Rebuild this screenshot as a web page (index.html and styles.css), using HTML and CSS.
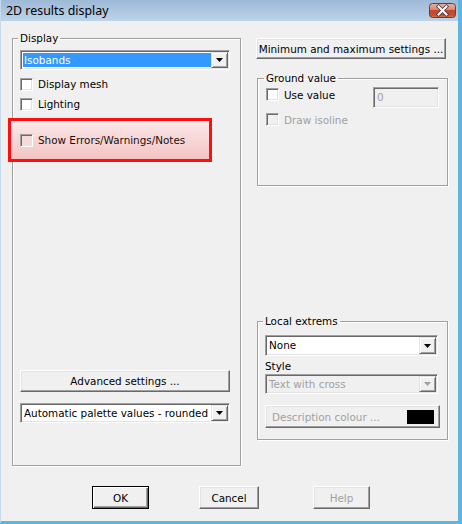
FILE: index.html
```html
<!DOCTYPE html>
<html lang="en">
<head>
  <meta charset="UTF-8" />
  <title>2D results display</title>
  <link rel="stylesheet" href="styles.css">
</head>
<body>
  <div class="window">
    <div class="titlebar">
      <span class="title">2D results display</span>
      <span class="close-btn">
        <svg width="27" height="15" viewBox="0 0 27 15">
          <defs>
            <linearGradient id="closeFill" x1="0" y1="0" x2="0" y2="1">
              <stop offset="0" stop-color="#eab2a4"/>
              <stop offset="0.45" stop-color="#d98672"/>
              <stop offset="0.5" stop-color="#c4462c"/>
              <stop offset="0.85" stop-color="#c9502f"/>
              <stop offset="1" stop-color="#e57c55"/>
            </linearGradient>
          </defs>
          <rect x="0.5" y="0.5" width="26" height="14" rx="3" fill="url(#closeFill)" stroke="#6b3b3b"/>
          <path d="M9.5 3.5 L17.5 11.5 M17.5 3.5 L9.5 11.5" stroke="#4a3a3a" stroke-width="3.6" stroke-linecap="square"/>
          <path d="M9.5 3.5 L17.5 11.5 M17.5 3.5 L9.5 11.5" stroke="#ffffff" stroke-width="2" stroke-linecap="square"/>
        </svg>
      </span>
    </div>

    <div class="client">
      <div class="columns">
        <!-- left: display settings -->
        <fieldset class="group group-display">
          <legend>Display</legend>
          <div class="combo">
            <span class="combo-text selected">Isobands</span>
            <span class="combo-arrow"><svg width="7" height="4" viewBox="0 0 7 4"><polygon points="0,0 7,0 3.5,4" fill="#000"/></svg></span>
          </div>
          <label class="check-row first-row"><span class="checkbox"></span>Display mesh</label>
          <label class="check-row"><span class="checkbox"></span>Lighting</label>
          <div class="highlight">
            <label class="check-row"><span class="checkbox pink"></span>Show Errors/Warnings/Notes</label>
          </div>
          <div class="spacer"></div>
          <div class="btn btn-advanced">Advanced settings ...</div>
          <div class="combo combo-palette">
            <span class="combo-text">Automatic palette values - rounded</span>
            <span class="combo-arrow"><svg width="7" height="4" viewBox="0 0 7 4"><polygon points="0,0 7,0 3.5,4" fill="#000"/></svg></span>
          </div>
        </fieldset>

        <!-- right: ranges, ground, extremes -->
        <div class="right-col">
          <div class="btn btn-minmax">Minimum and maximum settings ...</div>

          <fieldset class="group group-ground">
            <legend>Ground value</legend>
            <div class="ground-row">
              <label class="check-row small-row"><span class="checkbox"></span>Use value</label>
              <div class="value-input">0</div>
            </div>
            <label class="check-row small-row disabled isoline-row"><span class="checkbox off"></span>Draw isoline</label>
          </fieldset>

          <fieldset class="group group-extrems">
            <legend>Local extrems</legend>
            <div class="combo combo-none">
              <span class="combo-text">None</span>
              <span class="combo-arrow"><svg width="7" height="4" viewBox="0 0 7 4"><polygon points="0,0 7,0 3.5,4" fill="#000"/></svg></span>
            </div>
            <div class="field-label">Style</div>
            <div class="combo combo-style off">
              <span class="combo-text">Text with cross</span>
              <span class="combo-arrow"><svg width="7" height="4" viewBox="0 0 7 4"><polygon points="0,0 7,0 3.5,4" fill="#a0a0a0"/></svg></span>
            </div>
            <div class="btn btn-colour disabled">
              <span>Description colour ...</span>
              <span class="swatch"></span>
            </div>
          </fieldset>
        </div>
      </div>

      <div class="dialog-buttons">
        <div class="btn btn-dialog btn-default">OK</div>
        <div class="btn btn-dialog btn-cancel">Cancel</div>
        <div class="btn btn-dialog btn-help disabled">Help</div>
      </div>
    </div>
  </div>
</body>
</html>
```

FILE: styles.css
```css
html,body{margin:0;width:462px;height:524px;overflow:hidden;background:#f0f0f0}

.window {
  width: 462px;
  height: 524px;
  box-sizing: border-box;
  border-left: 1px solid #c6daee;
  border-right: 4px solid #5cb6df;
  border-bottom: 3px solid #5cb6df;
  background: #f0f0f0;
  display: flex;
  flex-direction: column;
  font-family: "DejaVu Sans", sans-serif;
  font-size: 10.4px;
  color: #000;
}

/* Title bar */
.titlebar {
  height: 21px;
  flex: none;
  display: flex;
  justify-content: space-between;
  align-items: flex-start;
  background: linear-gradient(#9db9d7, #bdd3ea);
}
.title {
  font-family: "Noto Sans", sans-serif;
  font-size: 12.4px;
  line-height: 21px;
  padding-left: 5px;
}
.close-btn {
  display: block;
  width: 27px;
  height: 15px;
  margin: 3px 2px 0 0;
}
.close-btn svg { display: block; }

/* Client area */
.client {
  flex: 1;
  display: flex;
  flex-direction: column;
  padding: 10px 0 0 11px;
}
.columns {
  display: flex;
  align-items: flex-start;
  gap: 15px;
}

/* Group boxes */
.group {
  margin: 0;
  min-width: 0;
  box-sizing: border-box;
  border: 1px solid #a0a0a0;
  box-shadow: 1px 1px 0 #fff, inset 1px 1px 0 #fff;
}
.group legend {
  padding: 0 2px;
  margin-left: -2px;
  line-height: 14px;
}

.group-display {
  width: 229px;
  height: 435px;
  padding: 5px 10px 42px 7px;
  display: flex;
  flex-direction: column;
}
.spacer { flex: 1; }

/* Checkboxes */
.check-row {
  display: flex;
  align-items: center;
  gap: 5px;
  height: 20px;
}
.first-row { margin-top: 4px; }
.checkbox {
  width: 13px;
  height: 13px;
  box-sizing: border-box;
  flex: none;
  background: #fff;
  border: 1px solid;
  border-color: #a0a0a0 #fff #fff #a0a0a0;
  box-shadow: inset 1px 1px 0 #696969, inset -1px -1px 0 #e3e3e3;
}
.checkbox.off { background: #f0f0f0; }
.checkbox.pink { background: #f6dada; }
.disabled { color: #a0a0a0; }

/* Red annotation around the errors option */
.highlight {
  margin: 4px 0 0 -12px;
  width: 204px;
  height: 44px;
  box-sizing: border-box;
  border: 3px solid #ff1010;
  background: linear-gradient(#fbe9e9, #f3c3c3);
  padding-left: 9px;
  display: flex;
  align-items: center;
  color: #1a1010;
}

/* Combo boxes */
.combo {
  height: 20px;
  box-sizing: border-box;
  background: #fff;
  border: 1px solid;
  border-color: #a0a0a0 #fff #fff #a0a0a0;
  box-shadow: inset 1px 1px 0 #696969, inset -1px -1px 0 #e3e3e3;
  padding: 1px;
  display: flex;
  align-items: stretch;
}
.combo-text {
  flex: 1;
  line-height: 16px;
  padding-left: 2px;
  white-space: nowrap;
  overflow: hidden;
}
.combo-text.selected {
  margin: 1px 0 1px 1px;
  line-height: 14px;
  padding-left: 1px;
  background: #3399ff;
  color: #fff;
}
.combo-arrow {
  width: 17px;
  flex: none;
  box-sizing: border-box;
  background: #f0f0f0;
  border: 1px solid;
  border-color: #e3e3e3 #696969 #696969 #e3e3e3;
  box-shadow: inset 1px 1px 0 #fff, inset -1px -1px 0 #a0a0a0;
  display: flex;
  align-items: center;
  justify-content: center;
}
.combo-arrow svg { display: block; }
.combo.off { background: #f0f0f0; color: #a0a0a0; }
.combo-palette { margin-top: 11px; }

/* Buttons */
.btn {
  box-sizing: border-box;
  background: #f0f0f0;
  border: 1px solid;
  border-color: #fff #696969 #696969 #fff;
  box-shadow: inset -1px -1px 0 #a0a0a0, inset 1px 1px 0 #e3e3e3;
  display: flex;
  align-items: center;
  justify-content: center;
  white-space: nowrap;
}
.btn-advanced { height: 22px; }
.btn-minmax { width: 190px; height: 21px; }

/* Right column */
.right-col {
  width: 192px;
  padding-top: 7px;
  display: flex;
  flex-direction: column;
  align-items: flex-start;
}
.group-ground {
  margin: 12px 0 0 1px;
  width: 191px;
  height: 115px;
  padding: 2px 8px 0 8px;
}
.ground-row {
  display: flex;
  justify-content: space-between;
  align-items: flex-start;
}
.small-row { height: 15px; margin-top: 0; }
.isoline-row { margin-top: 4px; }
.value-input {
  width: 66px;
  height: 21px;
  box-sizing: border-box;
  background: #f0f0f0;
  color: #a0a0a0;
  border: 1px solid;
  border-color: #a0a0a0 #fff #fff #a0a0a0;
  box-shadow: inset 1px 1px 0 #696969, inset -1px -1px 0 #e3e3e3;
  padding-left: 3px;
  line-height: 18px;
}

.group-extrems {
  margin: 128px 0 0 1px;
  width: 191px;
  height: 126px;
  padding: 7px 0 0 7px;
}
.combo-none { width: 173px; height: 21px; }
.field-label { line-height: 14px; margin-top: 3px; }
.combo-style { width: 173px; margin-top: 1px; }
.btn-colour {
  width: 175px;
  height: 23px;
  margin-top: 11px;
  justify-content: space-between;
  padding: 0 5px 0 6px;
}
.swatch {
  width: 27px;
  height: 14px;
  background: #000;
}

/* Dialog buttons */
.dialog-buttons {
  display: flex;
  margin: 20px 0 0 80px;
}
.btn-dialog { height: 23px; width: 57px; }
.btn-cancel { width: 60px; margin-left: 50px; }
.btn-help { margin-left: 54px; }
.btn-default {
  border-color: #000;
  box-shadow: inset 1px 1px 0 #fff, inset -1px -1px 0 #696969, inset -2px -2px 0 #a0a0a0;
}
```
